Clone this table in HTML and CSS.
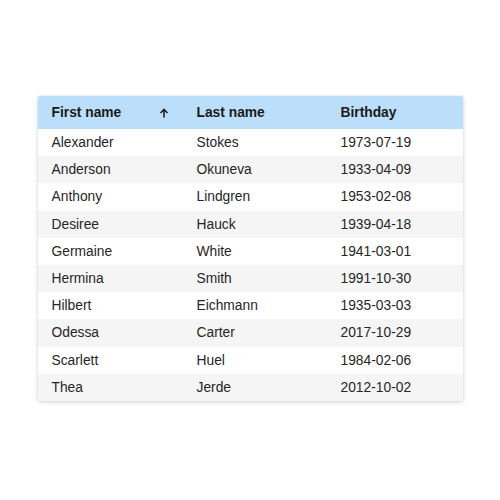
FILE: index.html
```html
<!DOCTYPE html>
<html>
<head>
<meta charset="utf-8">
<link rel="stylesheet" href="styles.css">
</head>
<body>
<div class="page">
  <div class="table">
    <div class="row head">
      <div class="cell sorted"><span>First name</span>
        <svg class="arrow" width="10" height="10" viewBox="0 0 10 10"><path d="M5 9.5V1.5M1.5 5L5 1.5L8.5 5" fill="none" stroke="#222" stroke-width="1.6"/></svg>
      </div>
      <div class="cell">Last name</div>
      <div class="cell">Birthday</div>
    </div>
    <div class="row"><div class="cell">Alexander</div><div class="cell">Stokes</div><div class="cell">1973-07-19</div></div>
    <div class="row"><div class="cell">Anderson</div><div class="cell">Okuneva</div><div class="cell">1933-04-09</div></div>
    <div class="row"><div class="cell">Anthony</div><div class="cell">Lindgren</div><div class="cell">1953-02-08</div></div>
    <div class="row"><div class="cell">Desiree</div><div class="cell">Hauck</div><div class="cell">1939-04-18</div></div>
    <div class="row"><div class="cell">Germaine</div><div class="cell">White</div><div class="cell">1941-03-01</div></div>
    <div class="row"><div class="cell">Hermina</div><div class="cell">Smith</div><div class="cell">1991-10-30</div></div>
    <div class="row"><div class="cell">Hilbert</div><div class="cell">Eichmann</div><div class="cell">1935-03-03</div></div>
    <div class="row"><div class="cell">Odessa</div><div class="cell">Carter</div><div class="cell">2017-10-29</div></div>
    <div class="row"><div class="cell">Scarlett</div><div class="cell">Huel</div><div class="cell">1984-02-06</div></div>
    <div class="row"><div class="cell">Thea</div><div class="cell">Jerde</div><div class="cell">2012-10-02</div></div>
  </div>
</div>
</body>
</html>
```
FILE: styles.css
```css
html, body {
  margin: 0;
  padding: 0;
  background: #fff;
}
.page {
  width: 500px;
  height: 500px;
  display: flex;
  align-items: flex-start;
  justify-content: center;
  padding-top: 96px;
  box-sizing: border-box;
  font-family: "Liberation Sans", Arial, sans-serif;
  font-size: 13.8px;
  color: #262626;
}
.table {
  width: 425px;
  border-radius: 2px;
  overflow: hidden;
  box-shadow: 0 1px 4px rgba(0,0,0,0.18), 0 0 2px rgba(0,0,0,0.06);
  background: #fff;
}
.row {
  display: grid;
  grid-template-columns: 145px 144px 136px;
  height: 27.2px;
  align-items: center;
}
.row:nth-child(odd) {
  background: #f5f5f5;
}
.row.head {
  height: 33px;
  background: #bbdefb;
  font-weight: bold;
  color: #1a1a1a;
}
.cell {
  padding: 0 14px;
  white-space: nowrap;
}
.cell.sorted {
  display: flex;
  align-items: center;
  justify-content: space-between;
}
.arrow {
  display: block;
}
```
